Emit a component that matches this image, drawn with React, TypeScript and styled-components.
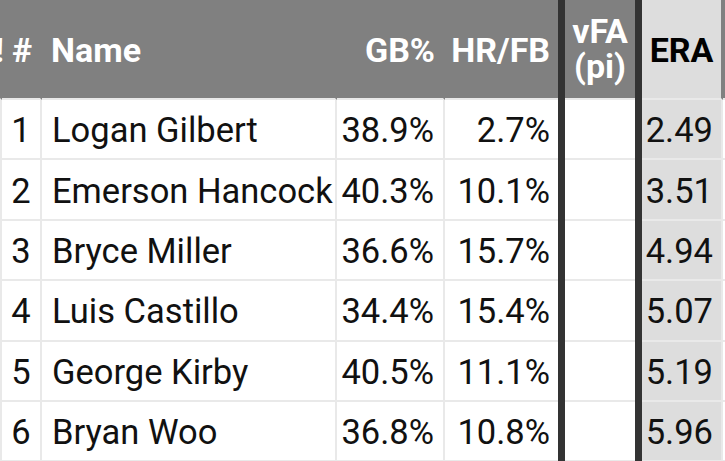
import React from "react";
import styled, { createGlobalStyle, css } from "styled-components";

const GlobalStyle = createGlobalStyle`
  html, body {
    margin: 0;
    padding: 0;
    background: #ffffff;
    overflow: hidden;
  }
  body {
    font-family: Roboto, "Liberation Sans", Arial, sans-serif;
  }
`;

const LIGHT = "#e9e9e9";
const DARK = "#333333";
const HEAD = "#808080";
const ERA_BG = "#dddddd";

const Table = styled.div`
  display: flex;
  flex-direction: column;
  width: max-content;
  margin-left: -40px;
`;

const Row = styled.div<{ $h: number }>`
  display: flex;
  height: ${(p) => p.$h}px;
`;

type Align = "left" | "center" | "right";

const Cell = styled.div<{
  $w: number;
  $align: Align;
  $head?: boolean;
  $era?: boolean;
  $padL?: number;
  $padR?: number;
  $noRight?: boolean;
}>`
  box-sizing: border-box;
  width: ${(p) => p.$w}px;
  flex: none;
  height: 100%;
  display: flex;
  align-items: center;
  justify-content: ${(p) =>
    p.$align === "left" ? "flex-start" : p.$align === "right" ? "flex-end" : "center"};
  text-align: ${(p) => p.$align};
  padding-left: ${(p) => p.$padL ?? 0}px;
  padding-right: ${(p) => p.$padR ?? 0}px;
  border-bottom: 2px solid ${LIGHT};
  white-space: nowrap;
  ${(p) =>
    p.$head
      ? css`
          background: ${p.$era ? ERA_BG : HEAD};
          color: ${p.$era ? "#000" : "#fff"};
          font-weight: 700;
          font-size: 34px;
          border-right: ${p.$noRight ? "none" : `2px solid ${HEAD}`};
          padding-top: 2px;
        `
      : css`
          background: ${p.$era ? ERA_BG : "#fff"};
          color: #111;
          font-weight: 400;
          font-size: 34.5px;
          border-right: ${p.$noRight ? "none" : `2px solid ${LIGHT}`};
          padding-top: 2px;
        `}
`;

const WrapHead = styled(Cell)`
  white-space: normal;
  line-height: 34.7px;
  padding-top: 0;
`;

const Divider = styled.div`
  flex: none;
  width: 7px;
  height: 100%;
  background: ${DARK};
`;

const Overflow = styled.span`
  position: relative;
  z-index: 1;
  margin-right: -4px;
`;

type Player = {
  rank: number;
  name: string;
  gb: string;
  hrfb: string;
  vfa: string;
  era: string;
};

const players: Player[] = [
  { rank: 1, name: "Logan Gilbert", gb: "38.9%", hrfb: "2.7%", vfa: "", era: "2.49" },
  { rank: 2, name: "Emerson Hancock", gb: "40.3%", hrfb: "10.1%", vfa: "", era: "3.51" },
  { rank: 3, name: "Bryce Miller", gb: "36.6%", hrfb: "15.7%", vfa: "", era: "4.94" },
  { rank: 4, name: "Luis Castillo", gb: "34.4%", hrfb: "15.4%", vfa: "", era: "5.07" },
  { rank: 5, name: "George Kirby", gb: "40.5%", hrfb: "11.1%", vfa: "", era: "5.19" },
  { rank: 6, name: "Bryan Woo", gb: "36.8%", hrfb: "10.8%", vfa: "", era: "5.96" },
];

const W = {
  hidden: 42,
  rank: 40,
  name: 295,
  gb: 108,
  hrfb: 113,
  vfa: 70,
  era: 81,
  next: 100,
};

export default function App() {
  return (
    <>
      <GlobalStyle />
      <Table>
        <Row $h={100}>
          <Cell $head $w={W.hidden} $align="right">
            <Overflow>!</Overflow>
          </Cell>
          <Cell $head $w={W.rank} $align="center" $padL={2}>
            #
          </Cell>
          <Cell $head $w={W.name} $align="left" $padL={9}>
            Name
          </Cell>
          <Cell $head $w={W.gb} $align="right" $padR={8}>
            GB%
          </Cell>
          <Cell $head $w={W.hrfb} $align="right" $padR={8} $noRight>
            HR/FB
          </Cell>
          <Divider />
          <WrapHead $head $w={W.vfa} $align="center" $noRight>
            vFA (pi)
          </WrapHead>
          <Divider />
          <Cell $head $era $w={W.era} $align="center">
            ERA
          </Cell>
          <Cell $head $w={W.next} $align="left" />
        </Row>
        {players.map((p) => (
          <Row key={p.rank} $h={60.4}>
            <Cell $w={W.hidden} $align="right" />
            <Cell $w={W.rank} $align="center">
              {p.rank}
            </Cell>
            <Cell $w={W.name} $align="left" $padL={10}>
              {p.name}
            </Cell>
            <Cell $w={W.gb} $align="right" $padR={9}>
              {p.gb}
            </Cell>
            <Cell $w={W.hrfb} $align="right" $padR={8} $noRight>
              {p.hrfb}
            </Cell>
            <Divider />
            <Cell $w={W.vfa} $align="center" $noRight>
              {p.vfa}
            </Cell>
            <Divider />
            <Cell $era $w={W.era} $align="right" $padR={8}>
              {p.era}
            </Cell>
            <Cell $w={W.next} $align="left" />
          </Row>
        ))}
      </Table>
    </>
  );
}
